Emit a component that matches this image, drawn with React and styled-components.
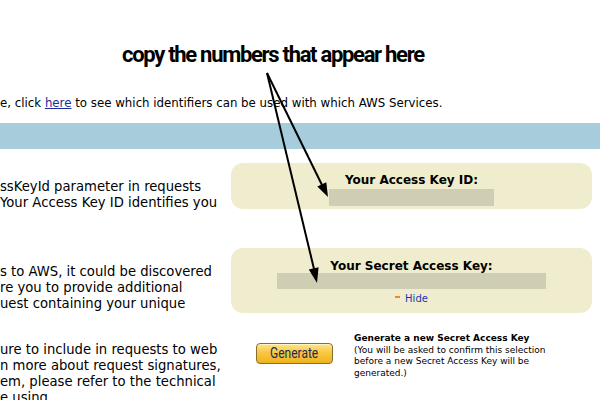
import React from 'react';
import styled, { createGlobalStyle } from 'styled-components';

const GlobalStyle = createGlobalStyle`
  html, body { margin: 0; padding: 0; background: #ffffff; }
  body { font-family: "DejaVu Sans", Verdana, sans-serif; color: #000; }
`;

//#region 版面
const Page = styled.div`
  position: relative;
  width: 600px;
  height: 400px;
  overflow: hidden;
  background: #fff;
`;

const Callout = styled.div`
  margin: 43px 0 0 122px;
  height: 24px;
  font-family: Roboto, "Liberation Sans", sans-serif;
  font-weight: bold;
  font-size: 22px;
  line-height: 24px;
  letter-spacing: -1.3px;
  white-space: nowrap;
`;

const IntroLine = styled.div`
  margin-top: 28px;
  font-size: 11.8px;
  line-height: 16px;
  white-space: nowrap;
`;

const Link = styled.a`
  color: #1b2c9c;
  text-decoration: underline;
`;

const SectionBar = styled.div`
  margin-top: 12px;
  height: 26px;
  background: #a7cddd;
`;

const Columns = styled.div`
  display: grid;
  grid-template-columns: 231px 361px;
`;

const LeftCol = styled.div`
  padding-top: 30px;
`;

const Para = styled.p`
  margin: ${(p) => p.$top || 0}px 0 0 0;
  font-size: 13.2px;
  line-height: 16px;
  white-space: nowrap;
`;

const RightCol = styled.div`
  padding-top: 14px;
  display: flex;
  flex-direction: column;
`;
//#endregion

//#region 金鑰區塊
const KeyBox = styled.div`
  background: #efedcd;
  border-radius: 12px;
  display: flex;
  flex-direction: column;
  align-items: center;
  padding: ${(p) => p.$pad};
  margin-top: ${(p) => p.$top || 0}px;
`;

const KeyLabel = styled.div`
  font-size: 12px;
  font-weight: bold;
  line-height: 14px;
  white-space: nowrap;
`;

const KeyValue = styled.div`
  width: ${(p) => p.$width}px;
  height: ${(p) => p.$height}px;
  margin-top: ${(p) => p.$top || 0}px;
  background: #cfcdb4;
`;

const HideLink = styled.a`
  margin-top: 3px;
  display: flex;
  align-items: center;
  gap: 5px;
  font-size: 10px;
  line-height: 13px;
  color: #1b35b8;
  text-decoration: none;
`;

const Dash = styled.span`
  width: 5px;
  height: 2px;
  background: #f08a1c;
  margin-top: -3px;
`;
//#endregion

//#region 產生新金鑰
const GenerateRow = styled.div`
  margin-top: 20px;
  display: flex;
  align-items: flex-start;
`;

const GenerateButton = styled.button`
  margin: 10px 0 0 25px;
  width: 77px;
  height: 21px;
  padding: 0;
  border: 1px solid #8a6f2c;
  border-radius: 4px;
  background: linear-gradient(#fde58a 0%, #f7c843 45%, #efb21f 100%);
  box-shadow: inset 0 1px 0 #fff3bf;
  color: #1c2a57;
  font-family: Roboto, "Liberation Sans", sans-serif;
  font-size: 15px;
  line-height: 19px;
  cursor: pointer;
`;

// 按鈕字型是窄體，用水平縮放模擬
const ButtonLabel = styled.span`
  display: inline-block;
  transform: scaleX(0.8);
`;

const GenerateNote = styled.div`
  margin-left: 21px;
  font-size: 9px;
  line-height: 11.5px;
  white-space: nowrap;
`;

const NoteTitle = styled.div`
  font-weight: bold;
`;
//#endregion

//#region 箭頭
const ArrowLayer = styled.svg`
  position: absolute;
  left: 0;
  top: 0;
  width: 600px;
  height: 400px;
  pointer-events: none;
`;

const Arrows = () => (
  <ArrowLayer viewBox="0 0 600 400">
    <line x1="267" y1="73" x2="322" y2="185" stroke="#000" strokeWidth="2" />
    <polygon points="328,197 317.3,186.6 326.3,182.2" fill="#000" />
    <line x1="267" y1="73" x2="314" y2="269" stroke="#000" strokeWidth="2" />
    <polygon points="317,283 308.8,269.6 318.6,267.2" fill="#000" />
  </ArrowLayer>
);
//#endregion

export default function App() {
  return (
    <>
      <GlobalStyle />
      <Page>
        <Callout>copy the numbers that appear here</Callout>
        <IntroLine>
          e, click <Link href="#">here</Link> to see which identifiers can be used with which AWS Services.
        </IntroLine>
        <SectionBar />
        <Columns>
          <LeftCol>
            <Para>ssKeyId parameter in requests<br />Your Access Key ID identifies you</Para>
            <Para $top={53}>s to AWS, it could be discovered<br />re you to provide additional<br />uest containing your unique</Para>
            <Para $top={30}>ure to include in requests to web<br />n more about request signatures,<br />em, please refer to the technical<br />e using</Para>
          </LeftCol>
          <RightCol>
            <KeyBox $pad="10px 0 3px">
              <KeyLabel>Your Access Key ID:</KeyLabel>
              <KeyValue $width={165} $height={17} $top={2} />
            </KeyBox>
            <KeyBox $pad="11px 0 8px" $top={39}>
              <KeyLabel>Your Secret Access Key:</KeyLabel>
              <KeyValue $width={269} $height={16} />
              <HideLink href="#"><Dash />Hide</HideLink>
            </KeyBox>
            <GenerateRow>
              <GenerateButton><ButtonLabel>Generate</ButtonLabel></GenerateButton>
              <GenerateNote>
                <NoteTitle>Generate a new Secret Access Key</NoteTitle>
                (You will be asked to confirm this selection<br />
                before a new Secret Access Key will be<br />
                generated.)
              </GenerateNote>
            </GenerateRow>
          </RightCol>
        </Columns>
        <Arrows />
      </Page>
    </>
  );
}
